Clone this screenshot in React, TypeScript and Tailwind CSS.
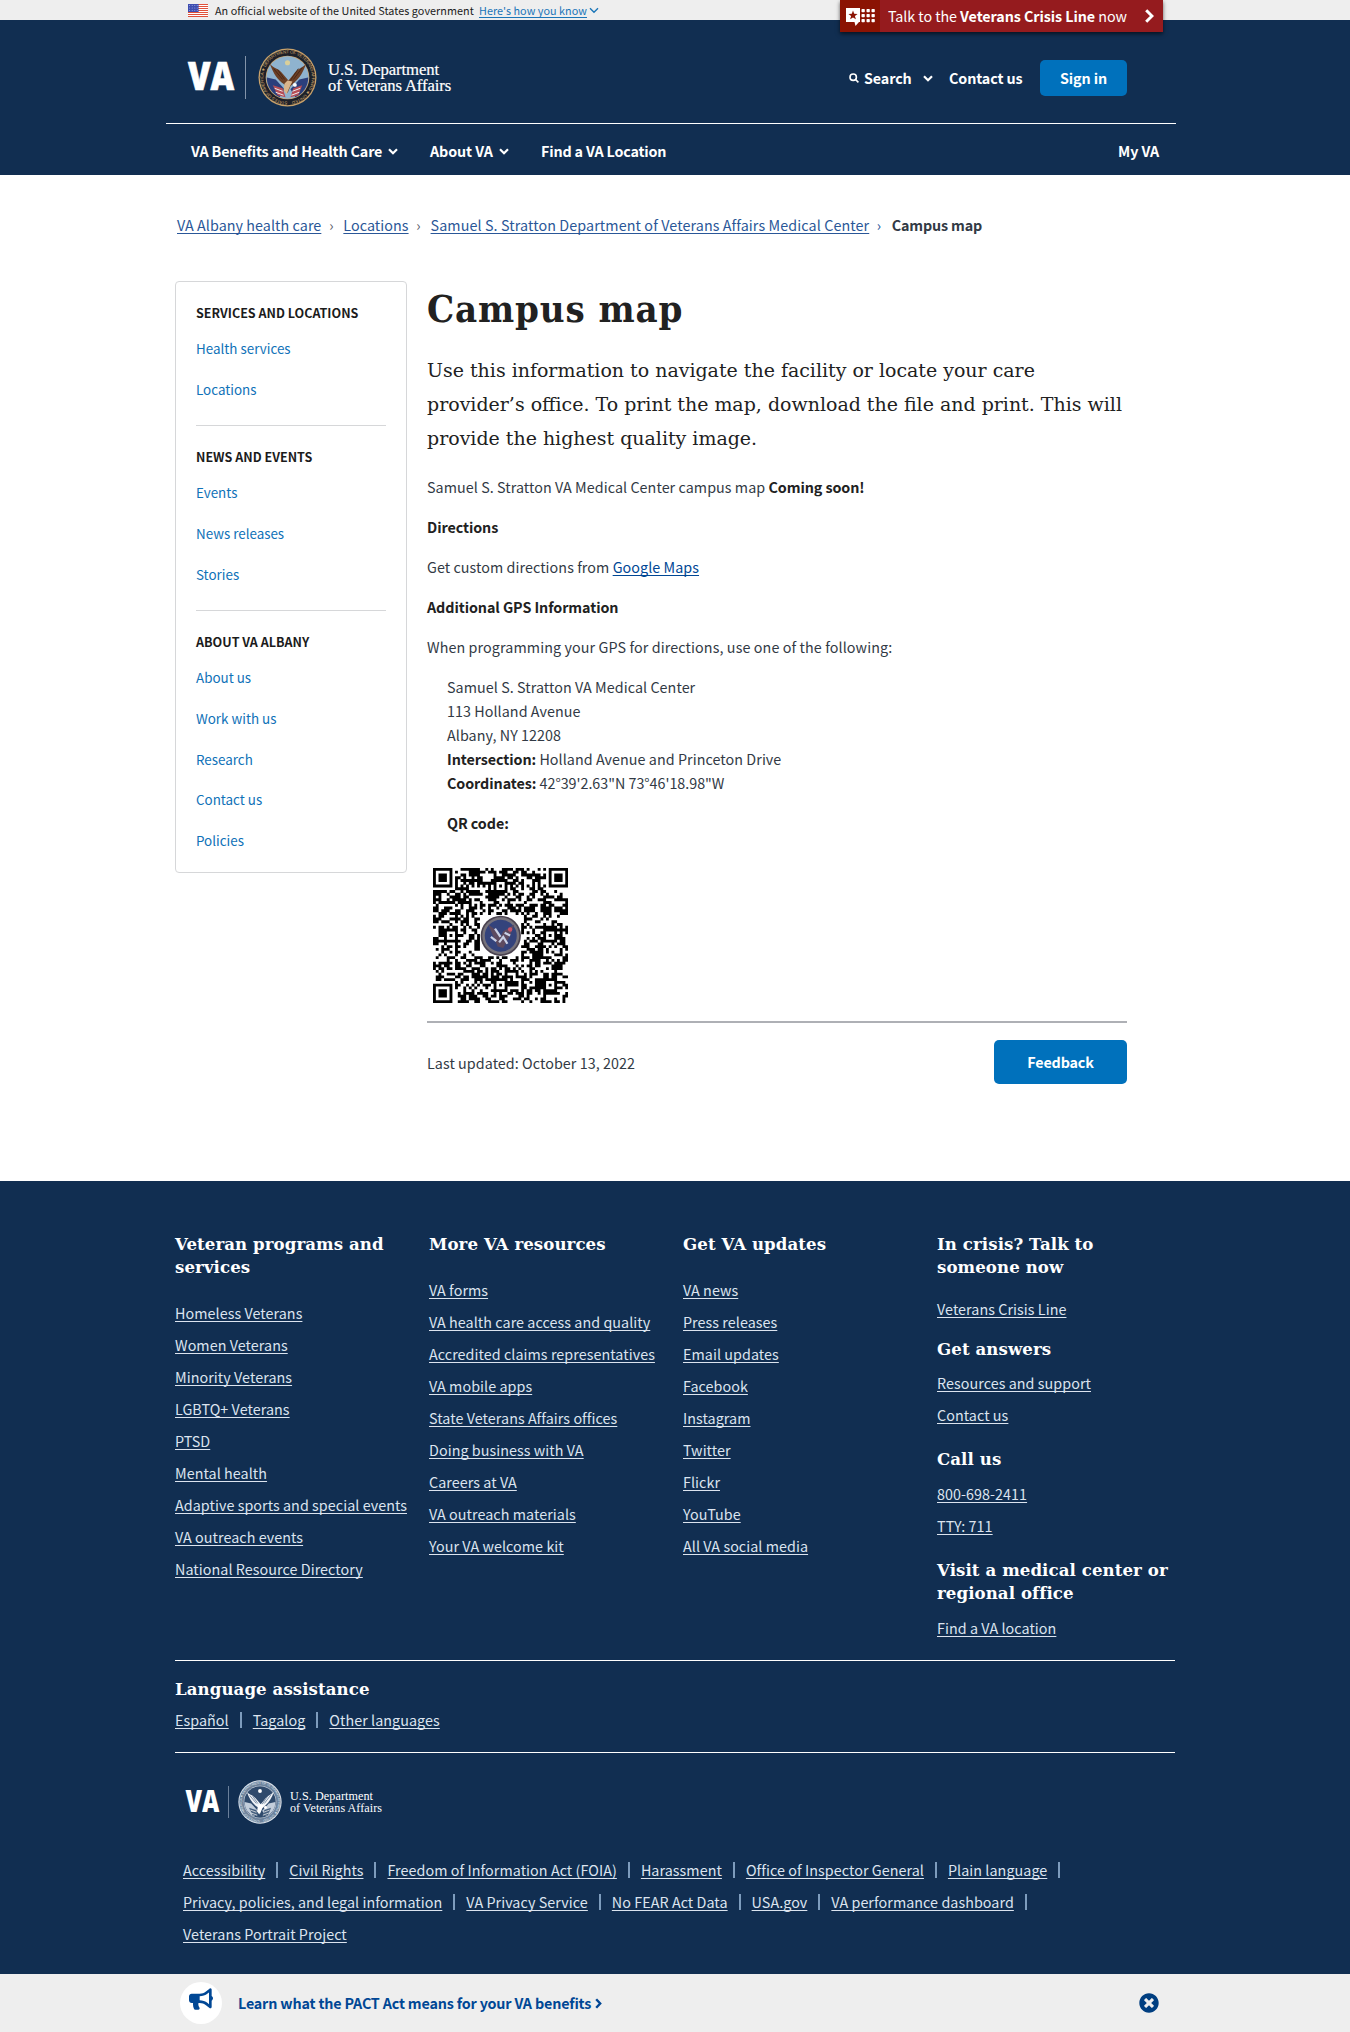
import React from "react";
import { FaBullhorn, FaTimesCircle } from "react-icons/fa";

const LINK = "underline decoration-1 underline-offset-[2px] [text-decoration-skip-ink:none]";
const SLAB = "font-['DejaVu_Serif',serif]";

function Chevron({ className = "", width = 2.2 }: { className?: string; width?: number }) {
  return (
    <svg viewBox="0 0 10 7" className={className} fill="none" stroke="currentColor" strokeWidth={width}>
      <path d="M1 1.2 5 5.2 9 1.2" />
    </svg>
  );
}

function Flag() {
  return (
    <svg viewBox="0 0 20 13" className="h-[13px] w-5">
      <rect width="20" height="13" fill="#fff" />
      {[0, 2, 4, 6, 8, 10, 12].map((y) => (
        <rect key={y} y={y} width="20" height="1" fill="#e0513a" />
      ))}
      <rect width="10.6" height="8" fill="#3d4db0" />
      {[1.5, 4, 6.5].map((y) =>
        [1.6, 4.2, 6.8, 9.2].map((x) => <circle key={`${x}-${y}`} cx={x} cy={y} r="0.5" fill="#aab4e8" />),
      )}
    </svg>
  );
}

function Seal({ id, className = "", mono = false }: { id: string; className?: string; mono?: boolean }) {
  const gold = mono ? "#dfe6ee" : "#c9a26b";
  return (
    <svg viewBox="0 0 60 60" className={className}>
      <defs>
        <path id={id} d="M30 54.6a24.6 24.6 0 1 1 .1 0" />
      </defs>
      <circle cx="30" cy="30" r="29.5" fill={gold} />
      <circle cx="30" cy="30" r="28.2" fill={mono ? "#6d829c" : "#1d2029"} />
      <text fontSize="4.6" fill={gold} fontWeight="400" fontFamily="Liberation Sans, sans-serif">
        <textPath href={`#${id}`} textLength="150">
          STATES OF AMERICA ★ DEPARTMENT OF VETERANS AFFAIRS ★ UNITED
        </textPath>
      </text>
      <circle cx="30" cy="30" r="22.2" fill={gold} />
      <circle cx="30" cy="30" r="21.5" fill={mono ? "#2f4a6c" : "#8fb3cf"} />
      <path d="M9 30a21.5 21.5 0 0 0 13 20l5-8-9-10z" fill={mono ? "#c3cedb" : "#2b3f7c"} />
      <path d="M51 30a21.5 21.5 0 0 1-13 20l-5-8 9-10z" fill={mono ? "#c3cedb" : "#2b3f7c"} />
      <path d="M15 38l10 3 3 9-8-2zM45 38l-9 3-3 9 8-2z" fill={mono ? "#46607f" : "#b54d56"} />
      <path d="M17 41l8 3M18 45l8 3M43 41l-8 3M42 45l-8 3" stroke="#eee" strokeWidth="1" />
      <path
        d="M12 16c3 8 6 14 12 19l4 3 2 8 3-7 4-4c6-5 9-11 12-19-5 5-9 5-13 11l-5 6-7-8c-4-5-8-4-12-9z"
        fill={mono ? "#f1f4f8" : "#6b3f26"}
      />
      <path d="M16 21l9 11M20 22l7 10M45 20l-9 12M41 21l-8 12" stroke={mono ? "#46607f" : "#432414"} strokeWidth=".9" />
      <path d="M27 36l3-3 5 1-2 4-4 9-3-4z" fill={mono ? "#fff" : "#d9b48b"} />
      <circle cx="37.5" cy="37.5" r="2" fill="#fff" />
      <circle cx="30" cy="15" r="2.6" fill={mono ? "#fff" : "#d9cf9a"} />
    </svg>
  );
}

const QR_SIZE = 49;

function buildQr(): string {
  let seed = 90210;
  const rand = () => {
    seed = (seed * 1103515245 + 12345) % 2147483648;
    return seed / 2147483648;
  };
  const ring = (r: number, c: number, cr: number, cc: number) => Math.max(Math.abs(r - cr), Math.abs(c - cc));
  const finders = [
    [3, 3],
    [3, QR_SIZE - 4],
    [QR_SIZE - 4, 3],
  ];
  const aligns = [
    [6, 24],
    [24, 6],
    [24, 42],
    [42, 24],
    [42, 42],
  ];
  let d = "";
  for (let r = 0; r < QR_SIZE; r++) {
    for (let c = 0; c < QR_SIZE; c++) {
      let on = rand() < 0.52;
      if (r === 6 || c === 6) on = (r + c) % 2 === 0;
      for (const [ar, ac] of aligns) {
        const k = ring(r, c, ar, ac);
        if (k <= 2) on = k !== 1;
      }
      for (const [fr, fc] of finders) {
        const k = ring(r, c, fr, fc);
        if (k <= 4) on = k !== 2 && k !== 4;
      }
      if (ring(r, c, 24, 24) <= 7) on = false;
      if (on) d += `M${c} ${r}h1.04v1.04h-1.04z`;
    }
  }
  return d;
}

const QR_PATH = buildQr();

function QrCode() {
  return (
    <svg viewBox="0 0 49 49" className="ml-[6px] size-[135px]">
      <path d={QR_PATH} fill="#000" />
      <circle cx="24.6" cy="24.6" r="7.3" fill="#4a4350" />
      <circle cx="24.6" cy="24.6" r="6.7" fill="#77737c" />
      <circle cx="24.6" cy="24.6" r="5.8" fill="#34437c" />
      <path d="M20 20.500l3.500 2.500 1 2 1-2 4-2.500-1.500 4-2.500 4.500-2-.5z" fill="#5d4a60" />
      <path d="M22.500 22l2 3M24 27l1.500-2 1.500 2.500M21 25l2 1.500M26 23.500l2 1" stroke="#c9d0e6" strokeWidth=".8" fill="none" />
      <circle cx="28" cy="22.3" r=".8" fill="#c7546a" />
    </svg>
  );
}

function SideGroup({ title, items, last }: { title: string; items: string[]; last?: boolean }) {
  return (
    <div className={last ? "" : "mb-[19px] border-b border-[#d6d7d9] pb-[16.500px]"}>
      <h2 className="text-[12.55px] leading-6 font-bold tracking-normal text-[#1b1b1b] uppercase">{title}</h2>
      <ul className="mt-[2px] text-[13.4px] tracking-normal text-[#1072b8]">
        {items.map((t) => (
          <li key={t} className="h-[40.8px] pt-[9px] leading-6">
            {t}
          </li>
        ))}
      </ul>
    </div>
  );
}

function FootHeading({ lines, className = "" }: { lines: string[]; className?: string }) {
  return (
    <h2 className={`${SLAB} text-[16.6px] leading-[23px] font-bold tracking-[0.08px] whitespace-nowrap ${className}`}>
      {lines.map((l) => (
        <span key={l} className="block">
          {l}
        </span>
      ))}
    </h2>
  );
}

function FootLinks({ items, className = "" }: { items: string[]; className?: string }) {
  return (
    <ul className={`flex flex-col gap-2 ${className}`}>
      {items.map((t) => (
        <li key={t} className="whitespace-nowrap">
          <a className={LINK}>{t}</a>
        </li>
      ))}
    </ul>
  );
}

function PipeRow({ items, trailing }: { items: string[]; trailing?: boolean }) {
  return (
    <div className="flex items-center whitespace-nowrap">
      {items.map((t, i) => (
        <React.Fragment key={t}>
          <a className={LINK}>{t}</a>
          {(trailing || i < items.length - 1) && <span className="mr-[11px] ml-[11px] h-4 w-[2px] bg-[#7d9cbd]" />}
        </React.Fragment>
      ))}
    </div>
  );
}

export default function App() {
  return (
    <div className="flex h-[2032px] w-[1350px] flex-col overflow-hidden bg-white font-['Noto_Sans_CJK_SC',sans-serif] text-[14.32px] leading-6 tracking-[0.06px] text-[#323a45]">
      <div className="relative h-5 bg-[#eeeeee]">
        <div className="flex h-5 items-center pl-[188px] text-[10.8px] leading-5 tracking-[0.05px] whitespace-nowrap text-[#212121]">
          <Flag />
          <span className="ml-[7px] w-[264px]">An official website of the United States government</span>
          <a className={`${LINK} text-[#1a75b8]`}>Here's how you know</a>
          <Chevron className="mt-px ml-[2px] h-[7px] w-[10px] text-[#1a75b8]" width={1.4} />
        </div>
        <div className="absolute top-0 left-[840px] z-10 flex h-8 w-[323px] items-center bg-[#951b1e] text-white shadow-[0_2px_4px_rgba(0,0,0,0.6)]">
          <div className="flex h-8 w-10 items-center bg-[#8b1303] pl-[6px]">
            <svg viewBox="0 0 29 18" className="mt-[2px] h-[18px] w-[29px]">
              <path d="M0 0h14v14h-1l-3.5 4-1-4H0z" fill="#fff" />
              <path d="M7 2.6l1.2 3.2 3.4.1-2.7 2.1 1 3.3L7 9.4l-2.9 1.9 1-3.3-2.7-2.1 3.4-.1z" fill="#8b1303" />
              {[1, 6, 11].map((y) => [15.5, 20.5, 25.5].map((x) => <rect key={`${x}-${y}`} x={x} y={y} width="3.300" height="3.300" rx=".7" fill="#fff" />))}
            </svg>
          </div>
          <span className="ml-2 w-[257px] tracking-[-0.07px] whitespace-nowrap">
            Talk to the <b>Veterans Crisis Line</b> now
          </span>
          <svg viewBox="0 0 9 14" className="h-[14px] w-[9px]" fill="none" stroke="#fff" strokeWidth="3">
            <path d="M1.2 1.2 7 7l-5.800 5.800" />
          </svg>
        </div>
      </div>

      <header className="h-[155px] bg-[#112e51] font-bold tracking-[-0.1px] text-white">
        <div className="ml-[166px] flex h-[104px] w-[1010px] items-start border-b border-white pl-[21px]">
          <svg viewBox="0 0 48 30" className="mt-[41px] h-[31px] w-[48px] overflow-visible">
            <text x="1" y="28.500" fontSize="39" fontWeight="800" fontFamily="Open Sans, sans-serif" fill="#fff" textLength="46" lengthAdjust="spacingAndGlyphs" stroke="#fff" strokeWidth=".7">
              VA
            </text>
          </svg>
          <span className="mt-9 ml-[10px] h-[43px] w-px bg-[#8394aa]" />
          <Seal id="seal-ring-top" className="mt-7 ml-[12px] size-[59px]" />
          <svg viewBox="0 0 124 36" className="mt-[39px] ml-[11px] h-[36px] w-[124px] overflow-visible" fontFamily="Liberation Serif, serif" fontSize="16.500" fontWeight="400" fill="#fff" stroke="#fff" strokeWidth=".2">
            <text x="0" y="16" textLength="111" lengthAdjust="spacingAndGlyphs">U.S. Department</text>
            <text x="0" y="32" textLength="123" lengthAdjust="spacingAndGlyphs">of Veterans Affairs</text>
          </svg>
          <div className="mt-10 ml-auto flex h-9 items-center pr-[49px]">
            <svg viewBox="0 0 10 10" className="size-[10px]" fill="none" stroke="#fff" strokeWidth="1.600">
              <circle cx="4.200" cy="4.200" r="3.200" />
              <path d="M6.500 6.500 9.400 9.400" />
            </svg>
            <span className="ml-[5px] w-[59px]">Search</span>
            <Chevron className="h-[7px] w-[10px]" />
            <span className="ml-4 w-[91px]">Contact us</span>
            <span className="h-9 w-[87px] rounded-[5px] bg-[#0071bc] text-center leading-[35px]">Sign in</span>
          </div>
        </div>
        <div className="ml-[191px] flex h-12 w-[968px] items-center pt-[6px] whitespace-nowrap">
          <span className="mr-[6px] w-[191px] tracking-[-0.14px]">VA Benefits and Health Care</span>
          <Chevron className="h-[7px] w-[10px]" />
          <span className="mr-[6px] ml-8 w-[63px]">About VA</span>
          <Chevron className="h-[7px] w-[10px]" />
          <span className="ml-8 tracking-[-0.16px]">Find a VA Location</span>
          <span className="ml-auto">My VA</span>
        </div>
      </header>

      <nav className="mt-[38px] ml-[177px] flex h-6 items-center whitespace-nowrap text-[#2a5798]">
        <a className={LINK}>VA Albany health care</a>
        <span className="w-[22px] pr-[2px] text-center text-[#5b616b]">›</span>
        <a className={LINK}>Locations</a>
        <span className="w-[22px] pr-[2px] text-center text-[#5b616b]">›</span>
        <a className={`${LINK} tracking-[0.1px]`}>Samuel S. Stratton Department of Veterans Affairs Medical Center</a>
        <span className="w-[22.500px] pr-[3px] text-center">›</span>
        <b className="tracking-[-0.15px] text-[#323a45]">Campus map</b>
      </nav>

      <main className="ml-[175px] flex h-[944px] shrink-0 pt-[44px]">
        <aside className="h-[592px] w-[232px] shrink-0 rounded-[4px] border border-[#d6d7d9] px-5 pt-[19px]">
          <SideGroup title="Services and locations" items={["Health services", "Locations"]} />
          <SideGroup title="News and events" items={["Events", "News releases", "Stories"]} />
          <SideGroup last title="About VA Albany" items={["About us", "Work with us", "Research", "Contact us", "Policies"]} />
        </aside>
        <div className="ml-5 w-[700px] pt-px text-[#323a45]">
          <h1 className="font-['DejaVu_Serif_Condensed','DejaVu_Serif',serif] text-[38px] leading-[54px] font-bold tracking-[0.85px] whitespace-nowrap text-[#212121] [font-stretch:condensed]">
            Campus map
          </h1>
          <p className={`${SLAB} mt-[17px] text-[18.98px] leading-[34px] tracking-normal whitespace-nowrap text-[#212121]`}>
            <span className="block">Use this information to navigate the facility or locate your care</span>
            <span className="block">provider’s office. To print the map, download the file and print. This will</span>
            <span className="block">provide the highest quality image.</span>
          </p>
          <div className="mt-5 flex flex-col gap-4 [&_b]:tracking-[-0.07px] [&_b]:text-[#212121]">
            <p>
              Samuel S. Stratton VA Medical Center campus map <b>Coming soon!</b>
            </p>
            <p>
              <b>Directions</b>
            </p>
            <p>
              Get custom directions from <a className={`${LINK} text-[#004795]`}>Google Maps</a>
            </p>
            <p>
              <b>Additional GPS Information</b>
            </p>
            <p className="tracking-[0.1px]">When programming your GPS for directions, use one of the following:</p>
            <p className="pl-5">
              Samuel S. Stratton VA Medical Center
              <br />
              113 Holland Avenue
              <br />
              Albany, NY 12208
              <br />
              <b>Intersection:</b> Holland Avenue and Princeton Drive
              <br />
              <b>Coordinates:</b> <span className="tracking-[-0.02px]">42°39'2.63"N 73°46'18.98"W</span>
            </p>
            <p className="pl-5">
              <b>QR code:</b>
            </p>
          </div>
          <div className="mt-[33px]">
            <QrCode />
          </div>
          <div className="mt-[18px] flex justify-between border-t-2 border-[#aeb0b5] pt-[17px]">
            <p className="mt-[11px]">Last updated: October 13, 2022</p>
            <button className="h-11 w-[133px] rounded-[5px] bg-[#0071bc] font-bold tracking-[-0.15px] text-white">Feedback</button>
          </div>
        </div>
      </main>

      <footer className="h-[793px] shrink-0 bg-[#112e51] pl-[175px] text-white">
        <div className="grid h-[479px] w-[1016px] grid-cols-4 pt-[52px] text-[#dce4ef]">
          <div>
            <FootHeading lines={["Veteran programs and", "services"]} className="text-white" />
            <FootLinks
              className="mt-[22px]"
              items={["Homeless Veterans", "Women Veterans", "Minority Veterans", "LGBTQ+ Veterans", "PTSD", "Mental health", "Adaptive sports and special events", "VA outreach events", "National Resource Directory"]}
            />
          </div>
          <div>
            <FootHeading lines={["More VA resources"]} className="text-white" />
            <FootLinks
              className="mt-[22px]"
              items={["VA forms", "VA health care access and quality", "Accredited claims representatives", "VA mobile apps", "State Veterans Affairs offices", "Doing business with VA", "Careers at VA", "VA outreach materials", "Your VA welcome kit"]}
            />
          </div>
          <div>
            <FootHeading lines={["Get VA updates"]} className="text-white" />
            <FootLinks
              className="mt-[22px]"
              items={["VA news", "Press releases", "Email updates", "Facebook", "Instagram", "Twitter", "Flickr", "YouTube", "All VA social media"]}
            />
          </div>
          <div>
            <FootHeading lines={["In crisis? Talk to", "someone now"]} className="text-white" />
            <FootLinks className="mt-[18px]" items={["Veterans Crisis Line"]} />
            <FootHeading lines={["Get answers"]} className="mt-[17px] text-white" />
            <FootLinks className="mt-[10px]" items={["Resources and support", "Contact us"]} />
            <FootHeading lines={["Call us"]} className="mt-[21px] text-white" />
            <FootLinks className="mt-[11px]" items={["800-698-2411", "TTY: 711"]} />
            <FootHeading lines={["Visit a medical center or", "regional office"]} className="mt-[21px] text-white" />
            <FootLinks className="mt-[11px]" items={["Find a VA location"]} />
          </div>
        </div>
        <div className="h-[93px] w-[1000px] border-y border-white pt-[17px] text-[#dce4ef]">
          <FootHeading lines={["Language assistance"]} className="text-white" />
          <div className="mt-[7px]">
            <PipeRow items={["Español", "Tagalog", "Other languages"]} />
          </div>
        </div>
        <div className="flex items-start pt-[27px] pl-[10px]">
          <svg viewBox="0 0 35 23" className="mt-[10px] h-[23px] w-[35px] overflow-visible">
            <text x="0.500" y="22" fontSize="29.500" fontWeight="800" fontFamily="Open Sans, sans-serif" fill="#fff" textLength="34" lengthAdjust="spacingAndGlyphs">
              VA
            </text>
          </svg>
          <span className="mt-[6px] ml-[8px] h-[32px] w-px bg-[#6a7f9a]" />
          <Seal id="seal-ring-bottom" mono className="ml-[9px] size-[44px]" />
          <svg viewBox="0 0 92 30" className="mt-[8px] ml-[8px] h-[30px] w-[92px] overflow-visible" fontFamily="Liberation Serif, serif" fontSize="12.300" fill="#fff">
            <text x="0" y="12" textLength="83" lengthAdjust="spacingAndGlyphs">U.S. Department</text>
            <text x="0" y="24" textLength="92" lengthAdjust="spacingAndGlyphs">of Veterans Affairs</text>
          </svg>
        </div>
        <div className="mt-[34px] ml-2 flex flex-col gap-2 tracking-[0.06px] text-[#dce4ef]">
          <PipeRow trailing items={["Accessibility", "Civil Rights", "Freedom of Information Act (FOIA)", "Harassment", "Office of Inspector General", "Plain language"]} />
          <PipeRow trailing items={["Privacy, policies, and legal information", "VA Privacy Service", "No FEAR Act Data", "USA.gov", "VA performance dashboard"]} />
          <PipeRow items={["Veterans Portrait Project"]} />
        </div>
      </footer>

      <div className="flex h-[58px] shrink-0 items-center bg-[#eeeeee] pl-[180px] font-bold text-[#004795]">
        <span className="flex size-[42px] items-center justify-center rounded-full bg-white">
          <FaBullhorn className="mb-2 size-[24px]" />
        </span>
        <span className="ml-4 tracking-[-0.17px] whitespace-nowrap">Learn what the PACT Act means for your VA benefits</span>
        <svg viewBox="0 0 7 11" className="ml-1 h-[11px] w-[7px]" fill="none" stroke="currentColor" strokeWidth="2.4">
          <path d="M1.200 1.200 5.200 5.500l-4 4.300" />
        </svg>
        <FaTimesCircle className="mr-[191px] ml-auto size-5 text-[#003e80]" />
      </div>
    </div>
  );
}
